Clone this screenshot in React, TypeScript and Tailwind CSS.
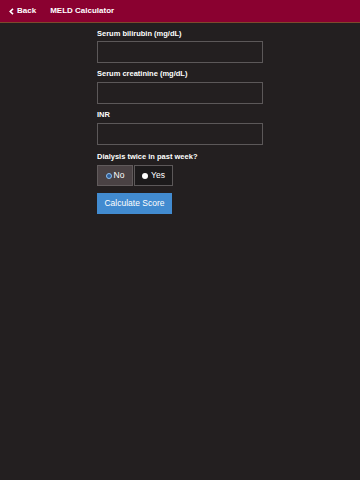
import React from "react";

export default function App() {
  const font = { fontFamily: '"Liberation Sans", Arial, sans-serif' };
  return (
    <div className="w-[360px] h-[480px] bg-[#231f20] text-white" style={font}>
      <div className="h-[23px] bg-[#8a0130] border-b border-[#7d4a2c] flex items-center text-[8px] font-bold">
        <div className="flex items-center pl-[9px]">
          <svg width="5" height="7" viewBox="0 0 5 7" className="mr-[3px]">
            <path d="M4 0.8 L1.2 3.5 L4 6.2" stroke="white" strokeWidth="1.6" fill="none" />
          </svg>
          <span>Back</span>
        </div>
        <span className="ml-[14px]">MELD Calculator</span>
      </div>
      <div className="w-[166px] mx-auto pt-[6px] flex flex-col">
        <label className="text-[7.5px] font-bold leading-[10px]">Serum bilirubin (mg/dL)</label>
        <div className="mt-[2px] h-[22px] border border-[#5c5859] bg-[#231f20]" />
        <label className="mt-[6px] text-[7.5px] font-bold leading-[10px]">Serum creatinine (mg/dL)</label>
        <div className="mt-[3px] h-[22px] border border-[#5c5859] bg-[#231f20]" />
        <label className="mt-[6px] text-[7.5px] font-bold leading-[10px]">INR</label>
        <div className="mt-[3px] h-[22px] border border-[#5c5859] bg-[#231f20]" />
        <label className="mt-[7px] text-[7.5px] font-bold leading-[10px]">Dialysis twice in past week?</label>
        <div className="mt-[3px] flex gap-[1px]">
          <div className="w-[36px] h-[21px] border border-[#615b5c] bg-[#4a4244] flex items-center justify-center text-[8.5px]">
            <span className="w-[6px] h-[6px] rounded-full bg-[#2f5f9a] border-[1.5px] border-[#8ec0f0] mr-[2px]" />
            No
          </div>
          <div className="w-[39px] h-[21px] border border-[#5c5859] bg-[#1c1a1b] flex items-center justify-center text-[8.5px]">
            <span className="w-[6px] h-[6px] rounded-full bg-white mr-[3px]" />
            Yes
          </div>
        </div>
        <button className="mt-[7px] w-[75px] h-[21px] bg-[#428bd0] text-white text-[8.5px] flex items-center justify-center">
          Calculate Score
        </button>
      </div>
    </div>
  );
}
